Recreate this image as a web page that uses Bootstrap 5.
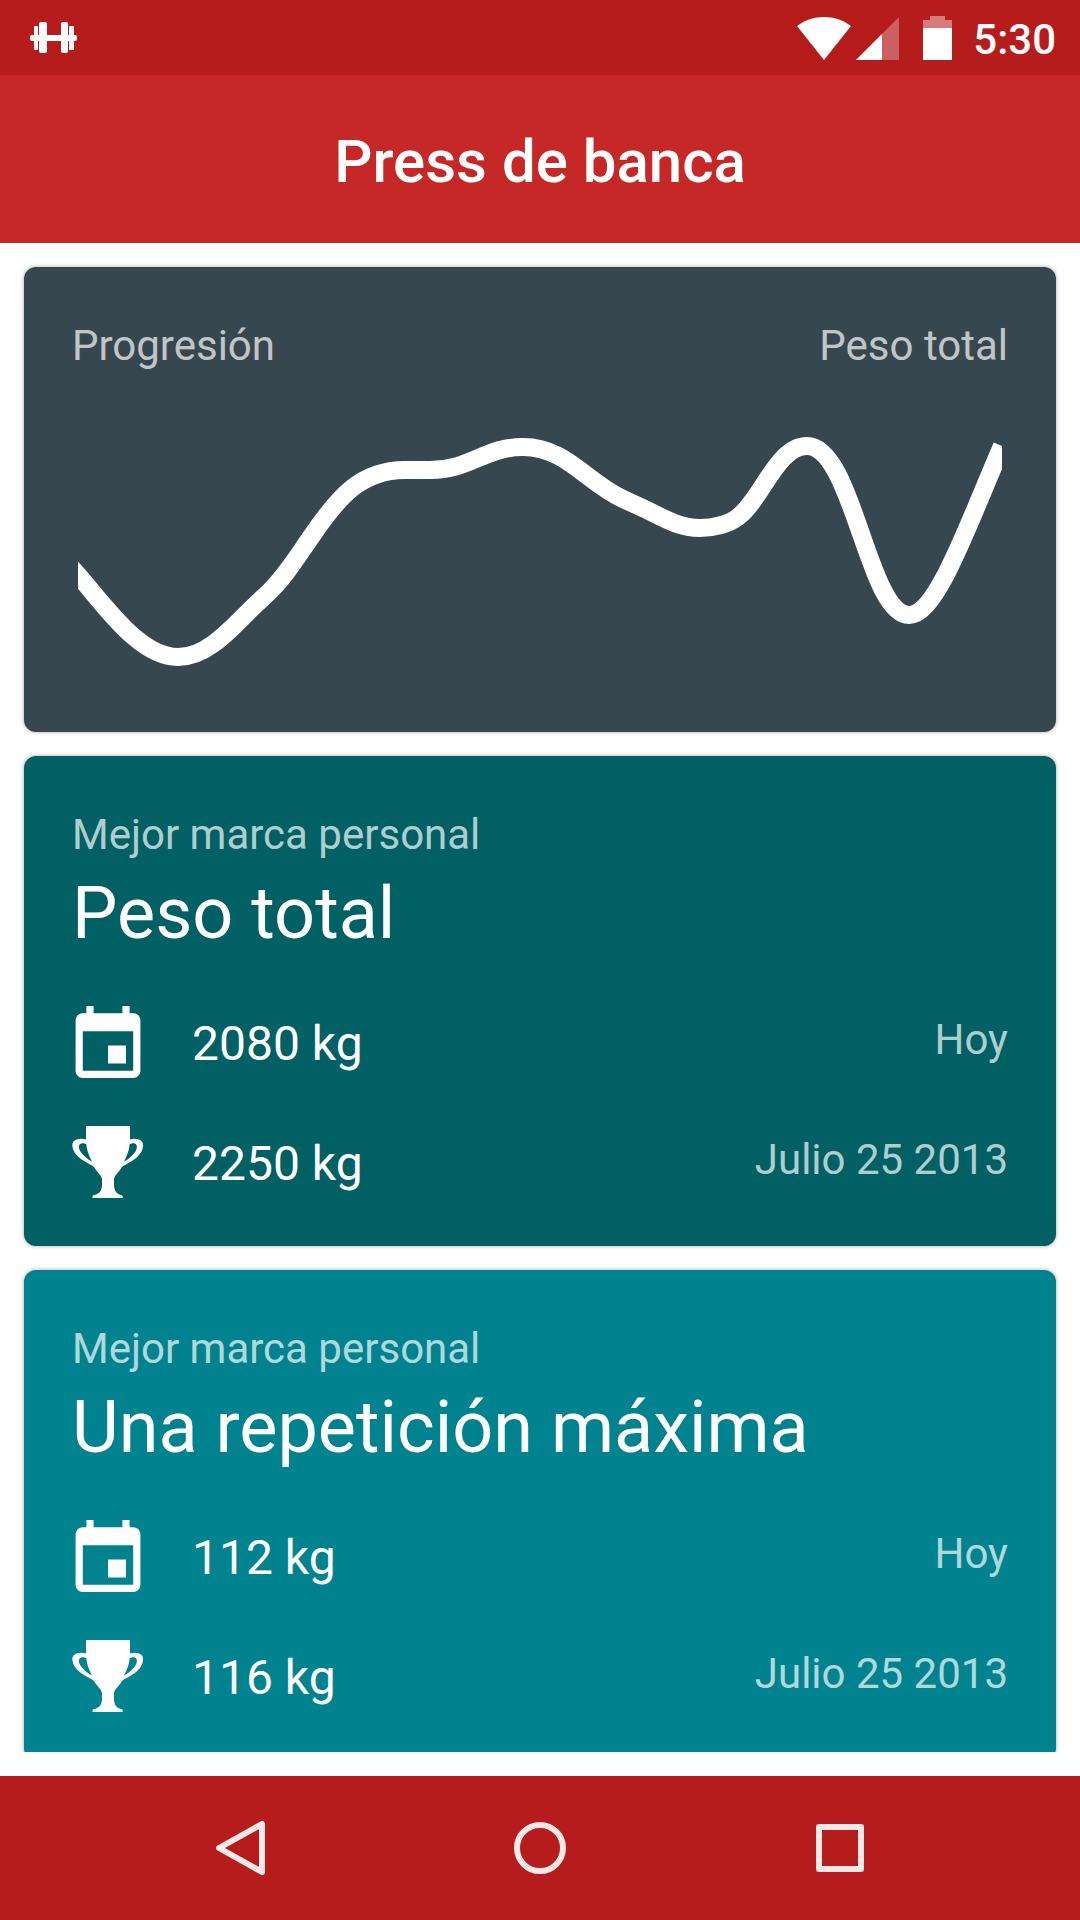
<!DOCTYPE html>
<html lang="es">
<head>
<meta charset="utf-8">
<meta name="viewport" content="width=device-width, initial-scale=1">
<title>Press de banca</title>
<link href="https://cdn.jsdelivr.net/npm/bootstrap@5.3.0/dist/css/bootstrap.min.css" rel="stylesheet">
<style>
  body { font-family: Roboto, "Noto Sans", sans-serif; background: #fff; font-size: 42px; line-height: 48px; }
  svg { display: block; fill: currentColor; }
  .status-bar { background: #b71c1c; height: 75px; padding: 0 24px 0 30px; }
  .clock { font-weight: 500; padding: 4px 0 0 21px; }
  .app-bar { background: #c62828; height: 168px; }
  .app-title { font-size: 60px; font-weight: 500; line-height: 72px; padding-top: 5px; }
  .feed { min-height: 0; gap: 24px; padding: 24px 24px 0; margin-bottom: 24px; }
  .stat-card { border: 0; border-radius: 12px; color: #fff; box-shadow: 0 0 4px rgba(0, 0, 0, .35); }
  .stat-card .card-body { padding: 55px 48px 44px; }
  .tone-slate { background: #37474f; }
  .tone-teal { background: #006064; }
  .tone-cyan { background: #00838f; }
  .soft { color: rgba(255, 255, 255, .7); }
  .record-name { font-size: 72px; font-weight: 400; line-height: 84px; margin: 13px 0 50px; }
  .records { gap: 44px; }
  .record-icon { width: 72px; height: 72px; margin-right: 48px; }
  .weight { font-size: 48px; line-height: 76px; }
  .date { line-height: 68px; }
  .chart { width: 100%; height: auto; padding: 0 6px; margin: 54px 0 4px; }
  .chart-line { fill: none; stroke: #fff; stroke-width: 18; }
  .nav-bar { background: #b71c1c; height: 144px; }
  .nav-key { width: 300px; color: #fbe9e7; }
  .nav-key svg { fill: none; stroke: currentColor; stroke-width: 6; stroke-linejoin: round; }
</style>
</head>
<body class="vh-100 d-flex flex-column overflow-hidden">

<svg class="d-none" aria-hidden="true">
  <symbol id="calendar" viewBox="2 1 20 20">
    <path d="M17 12h-5v5h5v-5zM16 1v2H8V1H6v2H5c-1.11 0-1.99.9-1.99 2L3 19c0 1.1.89 2 2 2h14c1.1 0 2-.9 2-2V5c0-1.1-.9-2-2-2h-1V1h-2zm3 18H5V8h14v11z"/>
  </symbol>
  <symbol id="trophy" viewBox="0 0 72 72">
    <path fill-rule="evenodd" d="M14 0H58V13.500C61 12.500 64 12.500 67 13.500C70.500 14.800 71.500 17.500 71 21C69.500 29.500 62 34 54 38.500C51.500 39.500 50 40.500 49 42.500C46.500 46.500 42.500 49.500 42 53V58C42 63.500 43.500 67 47.500 68.500C49.500 69 50.700 69.500 50.700 70.500V72H20.500V70.500C20.500 69.500 22 69 24 68.500C28.500 67 30 63.500 30 58V53C29.500 49.500 25.500 46.500 23 42.500C22 40.500 20.500 39.500 18 38.500C10 34 2 29.500 .5 21C-.2 17.500 1 14.800 4.500 13.500C7.500 12.500 11 12.500 14 13.500ZM14.300 18C11.500 17 8.500 17 7.300 19C6 21.500 7.500 24.500 10 27.500C13 31 16 33.500 20 35.500C17.500 30.500 15 25.500 14.300 18ZM57.700 18C57 25.500 54.500 30.500 52 35.500C56 33.500 59 31 62 27.500C64.500 24.500 65.500 21.500 64.500 19C63.500 17 60.500 17 57.700 18Z"/>
  </symbol>
</svg>

<div class="status-bar d-flex align-items-center flex-shrink-0 text-white">
  <svg width="48" height="32" viewBox="0 0 48 32" aria-hidden="true">
    <rect x="0" y="13" width="47" height="6" rx="2"/>
    <rect x="4" y="4" width="4" height="24" rx="1"/>
    <rect x="9" y="0" width="8" height="31" rx="2"/>
    <rect x="31" y="0" width="7" height="31" rx="2"/>
    <rect x="39" y="4" width="5" height="24" rx="1"/>
  </svg>
  <svg class="ms-auto" width="54" height="44" viewBox="0 0 54 44" aria-hidden="true">
    <path d="M0 10C8 4 17 1 27 1S46 4 54 10L27 44Z"/>
  </svg>
  <svg class="ms-1" width="44" height="44" viewBox="0 0 44 44" aria-hidden="true">
    <path d="M44 1V44H1Z" opacity=".3"/>
    <path d="M27 18V44H1Z"/>
  </svg>
  <svg class="ms-4" width="29" height="44" viewBox="0 0 29 44" aria-hidden="true">
    <path d="M7 0H22V4H29V12H0V4H7Z" opacity=".42"/>
    <rect y="12" width="29" height="32"/>
  </svg>
  <span class="clock">5:30</span>
</div>

<header class="app-bar d-flex align-items-center justify-content-center flex-shrink-0 text-white">
  <h1 class="app-title m-0">Press de banca</h1>
</header>

<main class="feed d-flex flex-column flex-grow-1 overflow-hidden">
  <section class="card stat-card tone-slate flex-shrink-0">
    <div class="card-body">
      <div class="d-flex justify-content-between soft">
        <span>Progresión</span>
        <span>Peso total</span>
      </div>
      <svg class="chart" viewBox="78 424 924 260" role="img" aria-label="Progresión del peso total">
        <svg x="78" y="424" width="924" height="260" viewBox="78 424 924 260">
          <path class="chart-line" d="M68 564L78 575C106 607 140 657 178 657C206 657 229 631 250 610L268 593C285 577 297 557 311 537C338 497 361 470 405 470H430C470 470 485 447 523 447C566 447 586 482 623 499L645 509C665 519 680 528 700 528C714 528 729 524 738 517C762 499 777 446 807 446C853 446 868 615 909 615C937 615 968 524 1002 446"/>
        </svg>
      </svg>
    </div>
  </section>

  <section class="card stat-card tone-teal flex-shrink-0">
    <div class="card-body">
      <div class="soft">Mejor marca personal</div>
      <h2 class="record-name">Peso total</h2>
      <div class="records d-flex flex-column">
        <div class="d-flex align-items-start">
          <svg class="record-icon" aria-hidden="true"><use href="#calendar"/></svg>
          <span class="weight">2080 kg</span>
          <span class="date soft ms-auto">Hoy</span>
        </div>
        <div class="d-flex align-items-start">
          <svg class="record-icon" aria-hidden="true"><use href="#trophy"/></svg>
          <span class="weight">2250 kg</span>
          <span class="date soft ms-auto">Julio 25 2013</span>
        </div>
      </div>
    </div>
  </section>

  <section class="card stat-card tone-cyan flex-shrink-0">
    <div class="card-body">
      <div class="soft">Mejor marca personal</div>
      <h2 class="record-name">Una repetición máxima</h2>
      <div class="records d-flex flex-column">
        <div class="d-flex align-items-start">
          <svg class="record-icon" aria-hidden="true"><use href="#calendar"/></svg>
          <span class="weight">112 kg</span>
          <span class="date soft ms-auto">Hoy</span>
        </div>
        <div class="d-flex align-items-start">
          <svg class="record-icon" aria-hidden="true"><use href="#trophy"/></svg>
          <span class="weight">116 kg</span>
          <span class="date soft ms-auto">Julio 25 2013</span>
        </div>
      </div>
    </div>
  </section>
</main>

<nav class="nav-bar d-flex justify-content-center flex-shrink-0" aria-label="Sistema">
  <button type="button" class="nav-key btn border-0 rounded-0 p-0 d-flex align-items-center justify-content-center" aria-label="Atrás">
    <svg width="50" height="56" viewBox="0 0 50 56"><path d="M47 4V52L4 28Z"/></svg>
  </button>
  <button type="button" class="nav-key btn border-0 rounded-0 p-0 d-flex align-items-center justify-content-center" aria-label="Inicio">
    <svg width="54" height="54" viewBox="0 0 54 54"><circle cx="27" cy="27" r="23"/></svg>
  </button>
  <button type="button" class="nav-key btn border-0 rounded-0 p-0 d-flex align-items-center justify-content-center" aria-label="Recientes">
    <svg width="50" height="50" viewBox="0 0 50 50"><rect x="4" y="4" width="42" height="42"/></svg>
  </button>
</nav>

<script src="https://cdn.jsdelivr.net/npm/bootstrap@5.3.0/dist/js/bootstrap.bundle.min.js"></script>
</body>
</html>
